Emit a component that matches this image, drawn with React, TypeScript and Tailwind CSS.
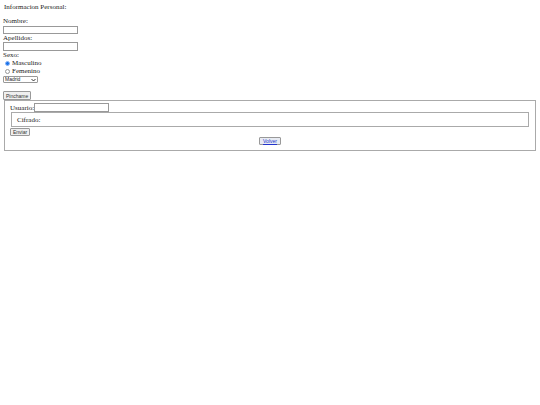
export default function App() {
  return (
    <div className="w-[540px] h-[405px] bg-white text-[#222] text-[7px] leading-[8px] font-['Liberation_Serif',serif]">
      <div className="pl-[3px] pt-[3px]">
        <div className="pl-[1px] h-[8px]">Informacion Personal:</div>
        <div className="h-[6px]" />
        <div className="h-[8px]">Nombre:</div>
        <input className="block mt-[1px] w-[75px] h-[8px] border border-[#999] bg-white" />
        <div className="h-[8px]">Apellidos:</div>
        <input className="block w-[75px] h-[9px] border border-[#999] bg-white" />
        <div className="h-[8px]">Sexo:</div>
        <label className="flex items-center h-[8px] pl-[2px]">
          <span className="w-[5px] h-[5px] rounded-full bg-[#1a73e8] border border-[#8ab4f8] mr-[2px]" />
          Masculino
        </label>
        <label className="flex items-center h-[8px] pl-[2px]">
          <span className="w-[5px] h-[5px] rounded-full border border-[#999] mr-[2px]" />
          Femenino
        </label>
        <div className="flex items-center justify-between mt-[1px] w-[35px] h-[7px] border border-[#999] rounded-[1px] px-[1px] font-['Liberation_Sans',sans-serif] text-[5px] leading-[5px]">
          <span>Madrid</span>
          <svg width="5" height="4" viewBox="0 0 5 4"><path d="M0.5 1 L2.5 3 L4.5 1" fill="none" stroke="#222" strokeWidth="0.9" /></svg>
        </div>
        <div className="h-[8px]" />
        <button className="block h-[9px] px-[2px] border border-[#999] bg-[#efefef] rounded-[1px] font-['Liberation_Sans',sans-serif] text-[5px] leading-[6px] text-[#333]">Pinchame</button>
      </div>
      <fieldset className="mx-[4px] w-[532px] h-[51px] border border-[#aaa] px-[5px] pt-[2px]">
        <div className="flex items-center h-[9px]">
          <span>Usuario:</span>
          <input className="w-[75px] h-[9px] border border-[#999] bg-white" />
        </div>
        <div className="ml-[1px] w-[518px] h-[15px] border border-[#aaa] pl-[5px] flex items-center">Cifrado:</div>
        <button className="block mt-[1px] h-[8px] px-[2px] border border-[#999] bg-[#efefef] rounded-[1px] font-['Liberation_Sans',sans-serif] text-[5px] leading-[6px] text-[#333]">Enviar</button>
        <div className="flex justify-center mt-[1px]">
          <button className="h-[8px] px-[3px] border border-[#999] bg-[#e8ebf3] rounded-[1px] font-['Liberation_Sans',sans-serif] text-[5px] leading-[6px] text-[#2233cc] underline">Volver</button>
        </div>
      </fieldset>
    </div>
  );
}
